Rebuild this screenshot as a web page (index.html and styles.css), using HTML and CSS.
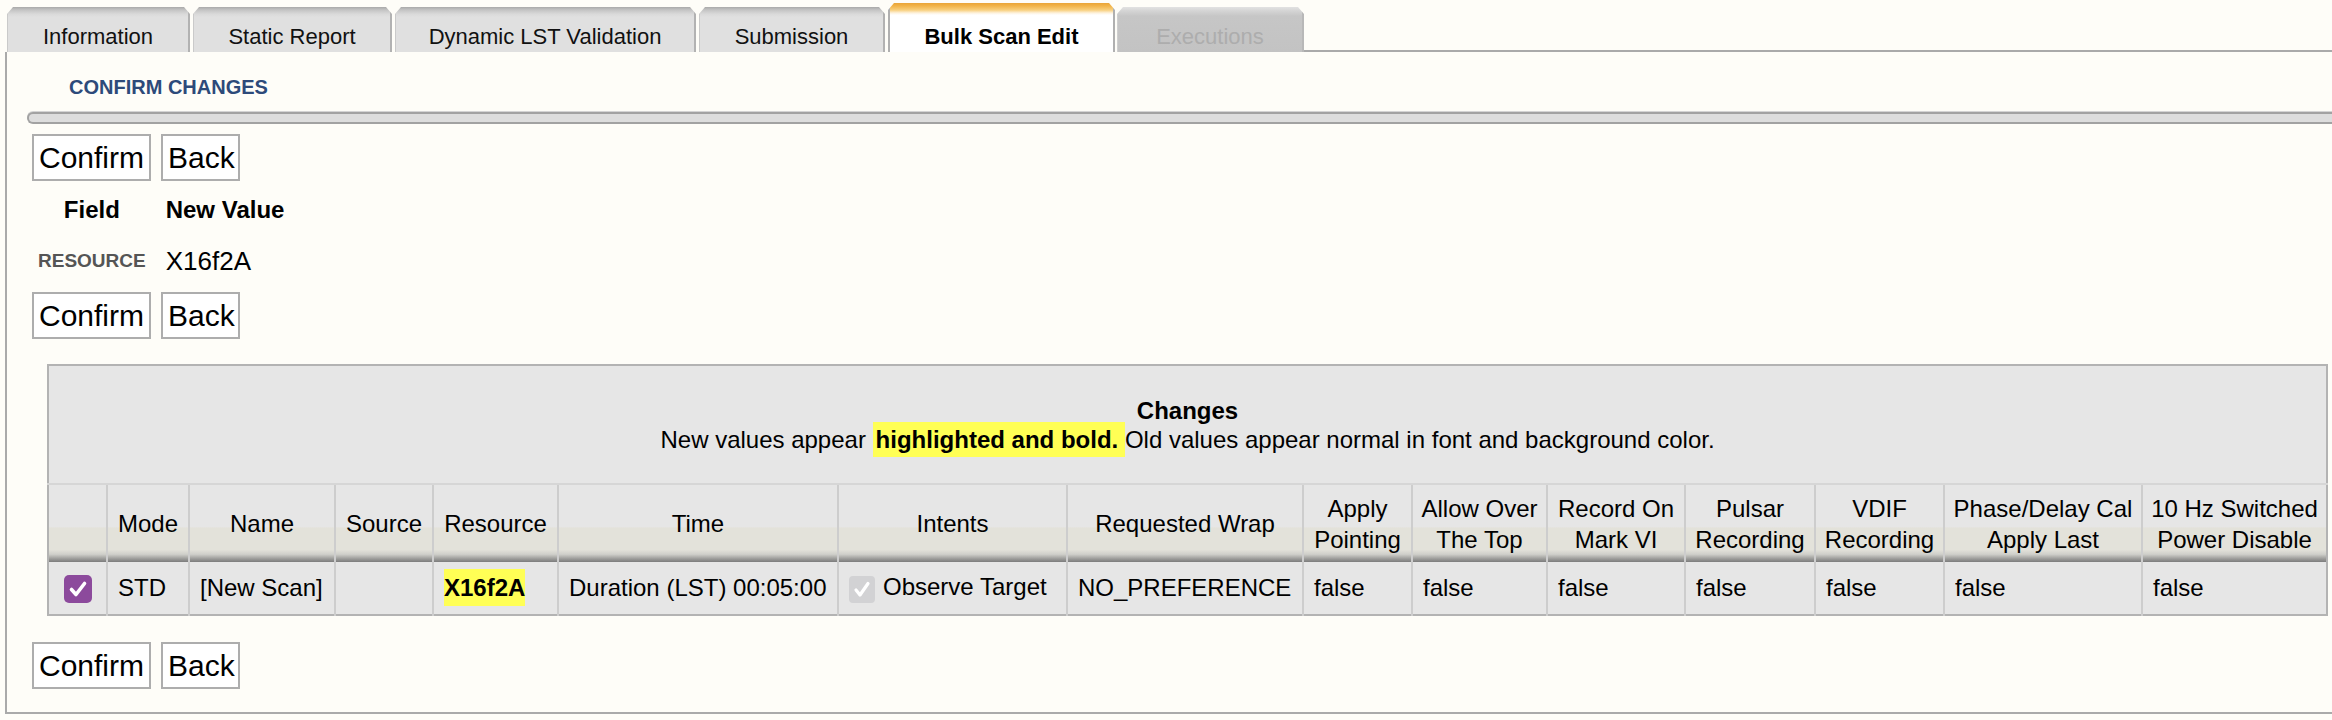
FILE: index.html
```html
<!DOCTYPE html>
<html>
<head>
<meta charset="utf-8">
<title>Bulk Scan Edit - Confirm Changes</title>
<link rel="stylesheet" href="styles.css">
</head>
<body>
<div class="page">
  <div class="tabbar">
    <div class="tab t-info">Information</div>
    <div class="tab t-static">Static Report</div>
    <div class="tab t-dyn">Dynamic LST Validation</div>
    <div class="tab t-sub">Submission</div>
    <div class="tab t-bulk active">Bulk Scan Edit</div>
    <div class="tab t-exec disabled">Executions</div>
    <div class="tabfill"></div>
  </div>
  <div class="panel">
    <h2 class="title">CONFIRM CHANGES</h2>
    <div class="rule"></div>
    <div class="buttons buttons-first">
      <button class="btn btn-confirm">Confirm</button><button class="btn btn-back">Back</button>
    </div>
    <table class="fields">
      <tr>
        <th class="fh">Field</th>
        <th class="fh">New Value</th>
      </tr>
      <tr>
        <td class="fname">RESOURCE</td>
        <td class="fval">X16f2A</td>
      </tr>
    </table>
    <div class="buttons buttons-second">
      <button class="btn btn-confirm">Confirm</button><button class="btn btn-back">Back</button>
    </div>
    <table class="changes">
      <colgroup>
        <col class="w1"><col class="w2"><col class="w3"><col class="w4"><col class="w5">
        <col class="w6"><col class="w7"><col class="w8"><col class="w9"><col class="w10">
        <col class="w11"><col class="w12"><col class="w13"><col class="w14"><col class="w15">
      </colgroup>
      <tr>
        <td class="capcell" colspan="15">
          <div class="cap-title">Changes</div>
          <div class="cap-text">New values appear <span class="hl hl-cap">highlighted and bold. </span>Old values appear normal in font and background color.</div>
        </td>
      </tr>
      <tr class="headrow">
        <th></th>
        <th>Mode</th>
        <th>Name</th>
        <th>Source</th>
        <th>Resource</th>
        <th>Time</th>
        <th>Intents</th>
        <th>Requested Wrap</th>
        <th>Apply Pointing</th>
        <th>Allow Over The Top</th>
        <th>Record On Mark VI</th>
        <th>Pulsar Recording</th>
        <th>VDIF Recording</th>
        <th>Phase/Delay Cal Apply Last</th>
        <th>10 Hz Switched Power Disable</th>
      </tr>
      <tr class="datarow">
        <td class="cbcell">
          <svg class="cb" width="28" height="28" viewBox="0 0 28 28"><rect x="0" y="0" width="28" height="28" rx="5" fill="#8c4a9c"/><path d="M7.5 14.5 L12 19.5 L20.5 8.5" fill="none" stroke="#ffffff" stroke-width="3.6" stroke-linecap="round" stroke-linejoin="round"/></svg>
        </td>
        <td>STD</td>
        <td>[New Scan]</td>
        <td></td>
        <td><span class="hl hl-cell">X16f2A</span></td>
        <td>Duration (LST) 00:05:00</td>
        <td class="intents"><svg class="cb cb-dis" width="26" height="27" viewBox="0 0 26 27"><rect x="0" y="0" width="26" height="27" rx="4" fill="#d2d2d4"/><path d="M7 14 L11 19 L19 7.5" fill="none" stroke="#ffffff" stroke-width="3.2" stroke-linecap="round" stroke-linejoin="round"/></svg><span class="intent-text">Observe Target</span></td>
        <td>NO_PREFERENCE</td>
        <td>false</td>
        <td>false</td>
        <td>false</td>
        <td>false</td>
        <td>false</td>
        <td>false</td>
        <td>false</td>
      </tr>
    </table>
    <div class="buttons buttons-third">
      <button class="btn btn-confirm">Confirm</button><button class="btn btn-back">Back</button>
    </div>
  </div>
</div>
</body>
</html>
```

FILE: styles.css
```css
html, body {
  margin: 0;
  padding: 0;
  background: #fefdf8;
}

body {
  font-family: "Liberation Sans", Arial, Helvetica, sans-serif;
  color: #000;
  width: 2332px;
  overflow: hidden;
}

.page {
  margin-left: 5px;
}

/* ---------- Tabs ---------- */
.tabbar {
  display: flex;
  align-items: flex-end;
  height: 52px;
  padding-left: 2px;
  gap: 3px;
}

.tab {
  box-sizing: border-box;
  flex: none;
  height: 45px;
  padding: 17px 0 0 0;
  font-size: 22px;
  line-height: 26px;
  text-align: center;
  white-space: nowrap;
  color: #111;
  background: linear-gradient(to bottom, #a9a9a9 0px, #c4c4c4 3px, #d9d9d9 7px, #e0e0e0 10px, #e0e0e0 100%);
  border-left: 1px solid #cacaca;
  border-right: 2px solid #b2b2b2;
  clip-path: polygon(0 7px, 6px 0, calc(100% - 6px) 0, 100% 7px, 100% 100%, 0 100%);
}

.t-info { width: 183px; }
.t-static { width: 199px; }
.t-dyn { width: 301px; }
.t-sub { width: 186px; }
.t-bulk { width: 227px; }
.t-exec { width: 187px; margin-left: -1px; }

.tab.active {
  height: 49px;
  padding-top: 21px;
  font-weight: bold;
  color: #000;
  background: linear-gradient(to bottom, #e9a437 0px, #f2b449 3px, #f8cf7c 7px, #fdf2de 10px, #ffffff 12px, #ffffff 100%);
  border-left: 2px solid #b0b0b0;
  border-right: 2px solid #b0b0b0;
}

.tab.disabled {
  color: #adadad;
  background: linear-gradient(to bottom, #e2e2e2 0px, #d4d4d4 4px, #c6c6c6 9px, #c3c3c3 100%);
  border-left: 1px solid #cfcfcf;
  border-right: 2px solid #b8b8b8;
}

.tabfill {
  flex: 1;
  height: 2px;
  background: #aaaaaa;
  margin-left: -3px;
}

/* ---------- Panel ---------- */
.panel {
  border-left: 2px solid #aaaaaa;
  border-bottom: 2px solid #aaaaaa;
  padding: 23px 0 23px 0;
}

.title {
  margin: 0 0 0 62px;
  font-size: 20px;
  line-height: 24px;
  font-weight: bold;
  color: #2d4a7a;
}

.rule {
  margin: 13px 0 0 20px;
  height: 8px;
  background: #dddddd;
  border-top: 2px solid #a2a2a2;
  border-bottom: 2px solid #a2a2a2;
  border-left: 2px solid #a2a2a2;
  border-radius: 6px 0 0 6px;
  box-shadow: 0 -1px 0 #d4d4d4;
}

/* ---------- Buttons ---------- */
.buttons {
  display: flex;
  gap: 10px;
  padding-left: 25px;
}

.buttons-first { margin-top: 10px; }
.buttons-second { margin-top: 1px; }
.buttons-third { margin-top: 26px; }

.btn {
  box-sizing: border-box;
  height: 47px;
  margin: 0;
  padding: 0 5px;
  font-family: "Liberation Sans", Arial, Helvetica, sans-serif;
  font-size: 30px;
  line-height: 43px;
  color: #000;
  background: #ffffff;
  border: 2px solid #adadad;
  border-radius: 0;
}

.btn-confirm { width: 119px; }
.btn-back { width: 79px; }

/* ---------- Field table ---------- */
.fields {
  margin: 8px 0 0 21px;
  border-collapse: collapse;
}

.fields th,
.fields td {
  padding: 0 10px;
}

.fh {
  height: 42px;
  font-size: 24px;
  font-weight: bold;
  text-align: center;
}

.fname {
  height: 60px;
  font-size: 19px;
  font-weight: bold;
  color: #555555;
  text-align: center;
}

.fval {
  font-size: 26px;
  text-align: left;
}

/* ---------- Changes table ---------- */
.changes {
  margin: 25px 0 0 40px;
  width: 2280px;
  table-layout: fixed;
  border-collapse: collapse;
  border: 2px solid #b3b3b3;
  font-size: 24px;
  background: #e6e6e6;
}

.w1 { width: 59px; }
.w2 { width: 82px; }
.w3 { width: 146px; }
.w4 { width: 98px; }
.w5 { width: 125px; }
.w6 { width: 280px; }
.w7 { width: 229px; }
.w8 { width: 236px; }
.w9 { width: 109px; }
.w10 { width: 135px; }
.w11 { width: 138px; }
.w12 { width: 130px; }
.w13 { width: 129px; }
.w14 { width: 198px; }
.w15 { width: 185px; }

.capcell {
  height: 117px;
  padding: 0;
  text-align: center;
  line-height: 29px;
  background: #e6e6e6;
  border-bottom: 2px solid #d6d6d6;
}

.cap-title {
  font-weight: bold;
}

.hl {
  background: #ffff55;
  font-weight: bold;
}

.hl-cap {
  padding: 4px 0 4px 3px;
}

.hl-cell {
  padding: 5px 0;
}

.headrow th {
  height: 77px;
  padding: 0 6px;
  font-weight: normal;
  text-align: center;
  line-height: 31px;
  vertical-align: middle;
  border-left: 2px solid #cdcdcd;
  background: linear-gradient(to bottom, #e6e6e6 0%, #e6e6e6 54%, #e3e2da 56%, #e3e2da 84%, #cfcfca 90%, #9a9a98 96%, #7c7c7c 100%);
}

.headrow th:first-child {
  border-left: none;
}

.datarow td {
  height: 52px;
  padding: 0 6px 0 10px;
  white-space: nowrap;
  overflow: hidden;
  vertical-align: middle;
  border-left: 2px solid #cdcdcd;
  background: #e6e6e6;
}

.datarow td:first-child {
  border-left: none;
}

.datarow td.cbcell {
  padding: 0;
  text-align: center;
}

.cb {
  display: inline-block;
  vertical-align: middle;
}

.intents .cb-dis {
  margin: 0 8px 0 10px;
  position: relative;
  top: 1px;
}

.datarow td.intents {
  padding-left: 0;
}

.intent-text {
  vertical-align: middle;
  position: relative;
  top: -2px;
}
```
